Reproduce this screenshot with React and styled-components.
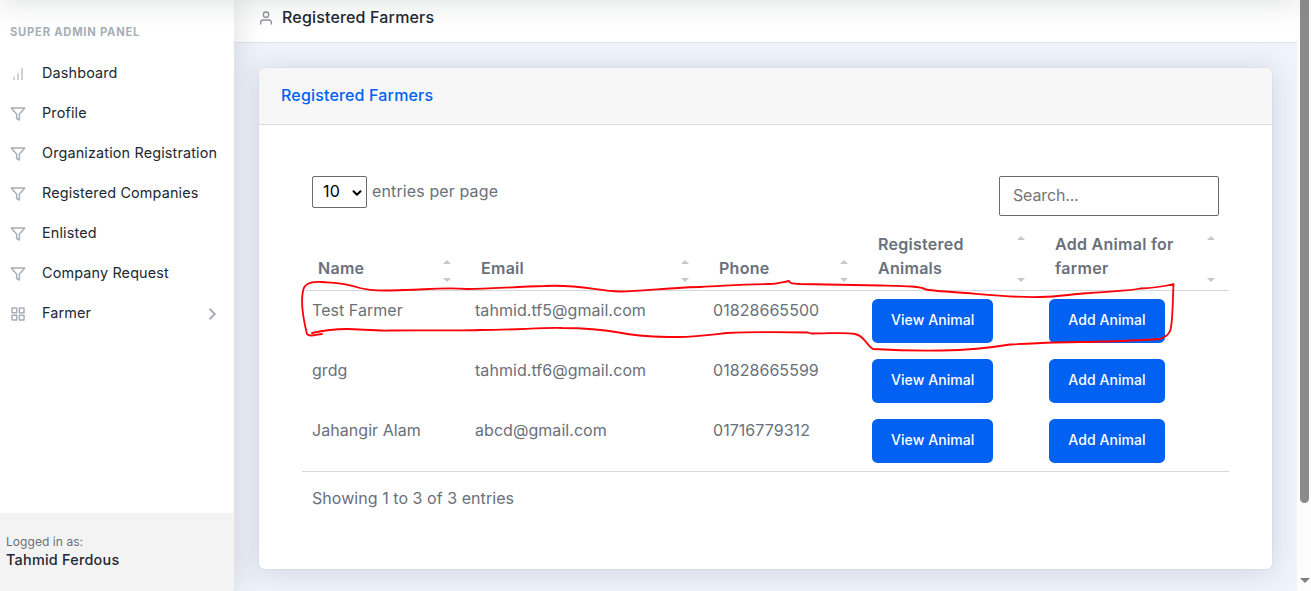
import React from 'react';
import styled, { createGlobalStyle } from 'styled-components';

const GlobalStyle = createGlobalStyle`
  *, *::before, *::after { box-sizing: border-box; }
  body {
    margin: 0;
    overflow: hidden;
    background: #eff3fc;
    color: #69707a;
    font: 400 16px/24px Inter, "Liberation Sans", sans-serif;
    letter-spacing: 0.05px;
  }
`;

const Page = styled.div`
  position: relative;
  display: grid;
  grid-template-columns: 234px 1fr 14px;
  height: 591px;
  overflow: hidden;
`;

const NavShadow = styled.div`
  position: absolute;
  z-index: 3;
  top: -60px;
  left: 0;
  width: 1297px;
  height: 60px;
  box-shadow: 0 2.4px 28px 0 rgba(33, 40, 50, 0.15);
`;

const Sidebar = styled.aside`
  position: relative;
  z-index: 2;
  display: flex;
  flex-direction: column;
  background: #fff;
  box-shadow: 2.4px 0 28px 0 rgba(33, 40, 50, 0.15);
  color: #212832;
  font-size: 14.4px;
  letter-spacing: 0.15px;
`;

const Heading = styled.div`
  padding: 26px 10px 15px;
  line-height: 12px;
  font-size: 11.2px;
  font-weight: 700;
  letter-spacing: 0.77px;
  color: #a7aeb8;
  text-transform: uppercase;
`;

const NavLink = styled.a`
  display: flex;
  align-items: center;
  height: 40px;
  padding: 0 15px 0 10px;
  white-space: nowrap;
`;

const Icon = styled.svg`
  flex: none;
  width: ${(p) => p.$size || 16}px;
  height: ${(p) => p.$size || 16}px;
  margin: ${(p) => p.$margin || '1px 16px 0 0'};
  fill: none;
  stroke: ${(p) => p.$color || '#a7aeb8'};
  stroke-width: ${(p) => p.$stroke || 2};
  stroke-linecap: ${(p) => p.$cap || 'round'};
  stroke-linejoin: ${(p) => (p.$cap ? 'miter' : 'round')};
`;

const UserBox = styled.footer`
  margin-top: auto;
  height: 78px;
  padding: 20px 6px 0;
  background: #f3f3f3;
`;

const UserCaption = styled.div`
  font-size: 12px;
  line-height: 18px;
  letter-spacing: 0.06px;
  color: #69707a;
`;

const UserName = styled.div`
  line-height: 18px;
  font-weight: 500;
  letter-spacing: 0.24px;
`;

const Main = styled.main`
  display: flex;
  flex-direction: column;
  min-width: 0;
`;

const PageHeader = styled.header`
  display: flex;
  align-items: center;
  height: 43px;
  padding: 0 24px 8px;
  background: #fff;
  border-bottom: 1px solid #dfe3ea;
`;

const PageTitle = styled.h1`
  margin: 0;
  font-size: 16px;
  font-weight: 500;
  letter-spacing: 0.17px;
  color: #212832;
`;

const Card = styled.section`
  margin: 25px 25px 0;
  height: 501px;
  border-radius: 6px;
  overflow: hidden;
  background: #fff;
  box-shadow: 0 2.4px 28px 0 rgba(33, 40, 50, 0.15), 0 0 0 1px rgba(33, 40, 50, 0.03);
`;

const CardHeader = styled.div`
  height: 57px;
  padding: 15px 22px;
  background: #f7f7f7;
  border-bottom: 1px solid #dcddde;
  color: #0061f2;
  font-weight: 500;
  letter-spacing: 0.17px;
`;

const CardBody = styled.div`
  padding: 51px 43px 0;
`;

const Toolbar = styled.div`
  display: flex;
  align-items: flex-start;
  justify-content: space-between;
  padding: 0 10px;
  height: 56px;
`;

const PerPage = styled.label`
  display: flex;
  align-items: flex-start;
  gap: 5px;
  line-height: 30px;
  letter-spacing: 0.12px;
`;

const SelectBox = styled.span`
  display: flex;
  align-items: flex-start;
  justify-content: space-between;
  width: 55px;
  height: 32px;
  padding: 0 3px 0 10px;
  border: 1px solid #6b6b6b;
  border-radius: 2px;
  line-height: 28px;
  color: #000;
`;

const Search = styled.input`
  width: 220px;
  height: 40px;
  padding: 0 13px 2px;
  border: 1px solid #6b6b6b;
  border-radius: 2px;
  background: #fff;
  font: inherit;
  letter-spacing: -0.15px;
  &::placeholder { color: #757575; opacity: 1; }
`;

const Table = styled.table`
  width: 927px;
  table-layout: fixed;
  border-collapse: separate;
  border-spacing: 0;
`;

const Col = styled.col`
  width: ${(p) => p.$width}px;
`;

const Th = styled.th`
  height: 59px;
  padding: 0 14px 10px 16px;
  border-bottom: 1px solid #d6d8db;
  vertical-align: bottom;
  text-align: left;
  font-weight: 600;
  letter-spacing: 0.28px;
`;

const ThInner = styled.div`
  display: flex;
  justify-content: space-between;
`;

const Sorter = styled.span`
  display: flex;
  flex-direction: column;
  justify-content: space-between;
  margin: 4px 0 -2px;
  &::before, &::after {
    content: '';
    border: 4px solid transparent;
  }
  &::before { border-top: 0; border-bottom-color: #c8c8c8; }
  &::after { border-bottom: 0; border-top-color: #c8c8c8; }
`;

const Td = styled.td`
  height: 60px;
  padding: 7px 10px 8px;
  vertical-align: top;
  border-bottom: ${(p) => (p.$last ? '1px solid #d6d8db' : '0')};
`;

const Button = styled.button`
  display: block;
  margin-top: 1px;
  height: 44px;
  padding: 0 19px 2px;
  width: ${(p) => p.$width}px;
  border: 0;
  border-radius: 5.6px;
  background: #0061f2;
  color: #fff;
  font: 500 14px/20px Inter, "Liberation Sans", sans-serif;
  letter-spacing: 0.08px;
  white-space: nowrap;
`;

const Info = styled.div`
  padding: 14px 10px 0;
`;

const Scrollbar = styled.div`
  display: flex;
  flex-direction: column;
  justify-content: space-between;
  align-items: center;
  padding: 0 2px 8px 3px;
  background: #fcfcfc;
`;

const Thumb = styled.div`
  width: 9px;
  height: 503px;
  border-radius: 0 0 5px 5px;
  background: #8b8b8b;
`;

const ScrollArrow = styled.div`
  border: 5px solid transparent;
  border-top-color: #7f7f7f;
  border-bottom: 0;
`;

const Markup = styled.svg`
  position: absolute;
  z-index: 4;
  inset: 0;
  width: 1311px;
  height: 591px;
  fill: none;
  stroke: #fb0007;
  stroke-width: 1.8;
  stroke-linejoin: round;
  stroke-linecap: round;
  pointer-events: none;
`;

const shapes = {
  bars: <path d="M6 21v-5M12 21V11M18 21V3" />,
  funnel: <path d="M22 3H2l8 9.46V19l4 2v-8.54z" />,
  grid: <path d="M3 3h7v7H3zM14 3h7v7h-7zM14 14h7v7h-7zM3 14h7v7H3z" />,
};

const links = [
  ['Dashboard', 'bars'],
  ['Profile', 'funnel'],
  ['Organization Registration', 'funnel'],
  ['Registered Companies', 'funnel'],
  ['Enlisted', 'funnel'],
  ['Company Request', 'funnel'],
  ['Farmer', 'grid'],
];

const columns = [
  ['Name', 163],
  ['Email', 238],
  ['Phone', 159],
  ['Registered Animals', 177],
  ['Add Animal for farmer', 190],
];

const farmers = [
  ['Test Farmer', 'tahmid.tf5@gmail.com', '01828665500'],
  ['grdg', 'tahmid.tf6@gmail.com', '01828665599'],
  ['Jahangir Alam', 'abcd@gmail.com', '01716779312'],
];

export default function App() {
  return (
    <Page>
      <GlobalStyle />
      <NavShadow />
      <Sidebar>
        <Heading>Super Admin Panel</Heading>
        {links.map(([label, shape]) => (
          <NavLink key={label}>
            <Icon
              viewBox="0 0 24 24"
              $color={shape === 'bars' ? '#bcc1c9' : undefined}
              $cap={shape === 'bars' ? 'butt' : undefined}
              $stroke={2.2}
            >
              {shapes[shape]}
            </Icon>
            {label}
            {shape === 'grid' && (
              <Icon viewBox="0 0 14 14" $size={14} $margin="1px 0 0 auto" $stroke={2} $cap="butt">
                <path d="M4.5 1.8L9.8 7l-5.3 5.2" />
              </Icon>
            )}
          </NavLink>
        ))}
        <UserBox>
          <UserCaption>Logged in as:</UserCaption>
          <UserName>Tahmid Ferdous</UserName>
        </UserBox>
      </Sidebar>
      <Main>
        <PageHeader>
          <Icon viewBox="0 0 24 24" $margin="1px 8px 0 0" $color="#90959d">
            <path d="M20 21v-2a4 4 0 0 0-4-4H8a4 4 0 0 0-4 4v2" />
            <circle cx="12" cy="7" r="4" />
          </Icon>
          <PageTitle>Registered Farmers</PageTitle>
        </PageHeader>
        <Card>
          <CardHeader>Registered Farmers</CardHeader>
          <CardBody>
            <Toolbar>
              <PerPage>
                <SelectBox>
                  10
                  <Icon viewBox="0 0 12 12" $size={12} $margin="10px 0 0" $color="#000" $stroke={2}>
                    <path d="M2.5 4.2L6 7.7l3.5-3.5" />
                  </Icon>
                </SelectBox>
                entries per page
              </PerPage>
              <Search placeholder="Search..." />
            </Toolbar>
            <Table>
              <colgroup>
                {columns.map(([name, width]) => <Col key={name} $width={width} />)}
              </colgroup>
              <thead>
                <tr>
                  {columns.map(([name]) => (
                    <Th key={name}>
                      <ThInner>{name}<Sorter /></ThInner>
                    </Th>
                  ))}
                </tr>
              </thead>
              <tbody>
                {farmers.map((farmer, i) => {
                  const last = i === farmers.length - 1;
                  return (
                    <tr key={farmer[1]}>
                      {farmer.map((value) => <Td key={value} $last={last}>{value}</Td>)}
                      <Td $last={last}><Button $width={121}>View Animal</Button></Td>
                      <Td $last={last}><Button $width={116}>Add Animal</Button></Td>
                    </tr>
                  );
                })}
              </tbody>
            </Table>
            <Info>Showing 1 to 3 of 3 entries</Info>
          </CardBody>
        </Card>
      </Main>
      <Scrollbar>
        <Thumb />
        <ScrollArrow />
      </Scrollbar>
      <Markup viewBox="0 0 1311 591">
        <path d="M312 333C321 331 333 329 347 329C360 329 374 331 390 330.500C430 330 460 331 480 330C515 330 540 327.500 562 328C585 328 605 330 622 333C640 336.500 660 337 677 337C697 337 710 335 727 333C750 332 780 332 808 332.500L811 333.500C830 333.500 846 332 855 334C865 336 866 345 873 349C890 350 915 351 942 350.500C975 350 995 347 1010 344.500C1040 343 1060 342 1080 342C1110 342 1135 340.500 1160 339C1172 335 1171 328 1172 318C1173 305 1173 295 1173.500 284C1166 286 1157 288 1140 288.500C1130 291 1110 291 1090 293C1070 294 1060 297 1040 297C1020 298 990 295 966 293C950 292 935 291 926 289.500C920 286 905 286 880 285.500C850 285 820 284.500 800 284C790 283.500 790 283 789 281C783 282 777 284 770 284C740 284 725 286 700 287C660 288 645 291.500 620 291.500C598 291.500 580 284 545 286C510 287 490 289 467 289C440 287 425 290 390 290.500C378 290.500 370 291 360 288C345 283 335 283 322 282C310 281 304 284 303 291C300 305 304 322 307 334C309 337 315 335 322 334" />
      </Markup>
    </Page>
  );
}
